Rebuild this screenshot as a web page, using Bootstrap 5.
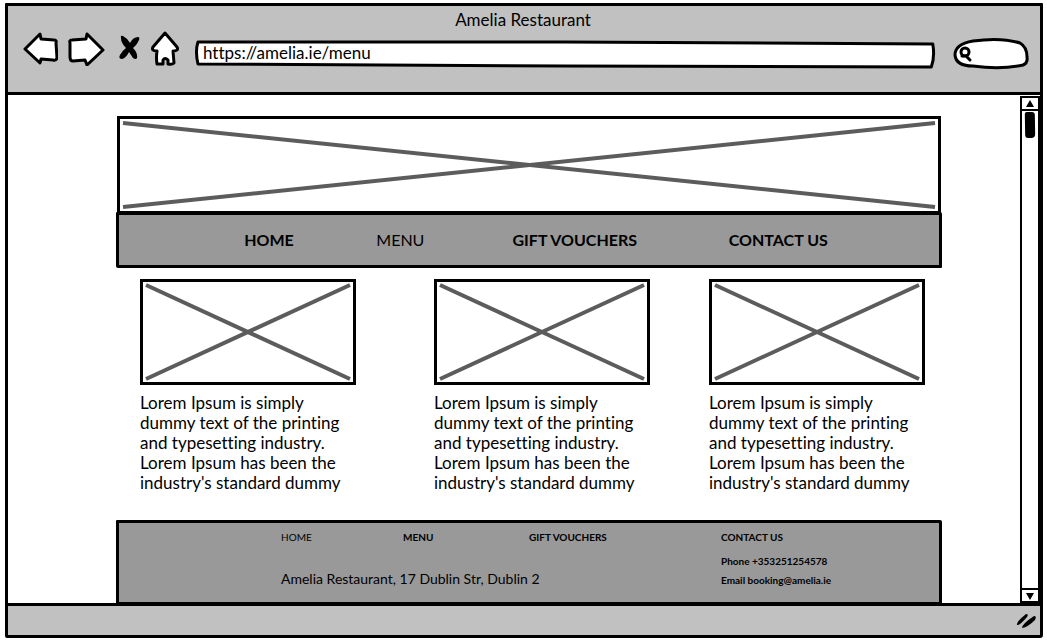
<!DOCTYPE html>
<html lang="en">
<head>
<meta charset="utf-8">
<meta name="viewport" content="width=device-width, initial-scale=1">
<title>Amelia Restaurant</title>
<link href="https://cdn.jsdelivr.net/npm/bootstrap@5.3.0/dist/css/bootstrap.min.css" rel="stylesheet">
<style>
  body { font-family: Lato, "Open Sans", sans-serif; font-variant-ligatures: none; color: #000; background: #fff; padding: 3px 4px 4px 5px; }
  a, a:hover { color: #000; text-decoration: none; }
  .browser { min-height: calc(100vh - 7px); border: 3px solid #000; border-radius: 1px 1px 3px 2px; }
  .chrome { background: #c1c1c1; border-bottom: 3px solid #000; padding-bottom: 25px; }
  .page-title { font-size: 17px; line-height: 20px; padding: 4px 2px 0 0; height: 23px; }
  .tools { padding: 0 11px 0 15px; }
  .tool { border: 0 solid #000; background: none; padding: 0; line-height: 0; }
  .icons { gap: 9px; width: 172px; }
  .ink { fill: #fff; stroke: #000; stroke-width: 3; stroke-linejoin: round; stroke-linecap: round; }
  .ink path { vector-effect: non-scaling-stroke; }
  .field { position: relative; height: 30px; padding-top: 10px; }
  .field > .ink { position: absolute; top: 0; left: 0; width: 100%; height: 100%; overflow: visible; }
  .field input { display: block; position: relative; width: 100%; height: 26px; border: 0; background: none; padding: 0 8px; font-size: 17px; line-height: 24px; color: #000; outline: 0; font-variant-ligatures: none; }
  .find { width: 76px; margin-left: 18px; }
  .find input { padding-left: 24px; }
  .field > .lens { width: 14px; height: 16px; left: 5px; top: 17px; }
  .site { padding: 21px 78px 0 108px; }
  .box { border: 3px solid #000; background: #fff; padding: 4px 3px; }
  .box svg { display: block; width: 100%; height: 100%; overflow: visible; }
  .box line { stroke: #5c5c5c; stroke-width: 4; vector-effect: non-scaling-stroke; }
  .hero { height: 98px; margin: 0 1px; }
  .bar { background: #999; border: 3px solid #000; border-radius: 1px 2px 1px 2px; }
  .main-menu { display: grid; grid-template-columns: 125fr 132fr 136fr 216fr 210fr; margin-top: -2px; height: 56px; align-items: center; font-size: 16px; line-height: 22px; padding-bottom: 1px; }
  .main-menu a:first-child, .foot a:first-child { grid-column-start: 2; }
  .cards { display: grid; grid-template-columns: 24fr 216fr 78fr 216fr 59fr 216fr 17fr; padding-top: 11px; }
  .dish:nth-child(1) { grid-column: 2; }
  .dish:nth-child(2) { grid-column: 4; }
  .dish:nth-child(3) { grid-column: 6; }
  .dish .box { height: 106px; padding: 3px; }
  .dish p { font-size: 17px; line-height: 20px; margin: 8px 0 0; white-space: nowrap; }
  .foot { display: grid; grid-template-columns: 162fr 122fr 126fr 192fr 218fr; grid-template-rows: 28px 19px 19px; margin-top: auto; margin-bottom: -2px; font-size: 10px; line-height: 28px; height: 85px; }
  .place { grid-column: 2 / 5; grid-row: 2 / 4; font-size: 14px; line-height: 20px; align-self: end; font-style: normal; }
  .foot .line { grid-column: 5; line-height: 21px; }
  .scroller { width: 20px; margin: 1px 0 0; border: 2px solid #000; }
  .scroller button { height: 13px; }
  .up { border-bottom-width: 2px; }
  .down { border-top-width: 2px; }
  .thumb { width: 10px; height: 26px; background: #000; border-radius: 2px 3px 4px 3px; margin: 1px auto; transform: rotate(-1deg); }
  .status { background: #c1c1c1; border-top: 3px solid #000; height: 32px; padding: 0 3px; }
</style>
</head>
<body>
<div class="browser d-flex flex-column">
  <header class="chrome">
    <div class="page-title text-center">Amelia Restaurant</div>
    <div class="tools d-flex align-items-start">
      <div class="icons d-flex align-items-start flex-shrink-0">
        <button class="tool" type="button" aria-label="Back"><svg class="ink" width="35" height="36"><path d="M2 20 17 5 18 10 31 11Q34 11 33 14L34 29Q33 32 30 31L18 30 17 34Z"/></svg></button>
        <button class="tool" type="button" aria-label="Forward"><svg class="ink" width="38" height="37"><path d="M3 14Q2 11 5 11L19 10 20 5 36 21 20 36 18 31 6 32Q3 32 3 28Z"/></svg></button>
        <button class="tool ms-1" type="button" aria-label="Stop"><svg width="22" height="32"><path d="M3 9Q2 6 5 7 9 9 12 14 15 8 20 8 22 8 21 11 19 16 15 19 20 24 19 29 18 31 15 29L11 23Q8 29 4 30 0 30 2 26 4 22 8 19 3 14 3 9Z"/></svg></button>
        <button class="tool" type="button" aria-label="Home"><svg class="ink" width="30" height="38"><path d="M16 4 28 18Q30 22 24 22L25 34Q23 36 19 35L19 31Q16 28 14 31L14 35 8 35Q7 29 8 22 2 22 4 18Z"/></svg></button>
      </div>
      <div class="field flex-grow-1">
        <svg class="ink" viewBox="0 0 100 30" preserveAspectRatio="none" aria-hidden="true"><path d="M.4 13Q0 22 .4 35L50 37 99.5 38Q100 28 99.7 15L50 13Z"/></svg>
        <input type="text" aria-label="Address" value="https://amelia.ie/menu">
      </div>
      <div class="field find">
        <svg class="ink" viewBox="0 0 76 30" preserveAspectRatio="none" aria-hidden="true"><path d="M20 12Q48 8 67 14 74 18 74 28 75 34 70 36 48 41 20 37 3 37 2 26 2 15 20 12Z"/></svg>
        <svg class="ink lens" viewBox="0 0 14 16" aria-hidden="true"><circle cx="7" cy="6" r="4"/><path d="M4 10 8 10 12 14"/></svg>
        <input type="text" aria-label="Search">
      </div>
    </div>
  </header>
  <div class="d-flex flex-grow-1">
    <div class="site d-flex flex-column flex-grow-1">
      <div class="box hero"><svg viewBox="0 0 100 100" preserveAspectRatio="none" role="img" aria-label="Banner"><line x1="0" y1="0" x2="100" y2="100"/><line x1="0" y1="100" x2="100" y2="0"/></svg></div>
      <nav class="bar main-menu fw-bold">
        <a href="#">HOME</a><a href="#" class="fw-normal" aria-current="page">MENU</a><a href="#">GIFT VOUCHERS</a><a href="#">CONTACT US</a>
      </nav>
      <main class="cards">
        <article class="dish"><div class="box"><svg viewBox="0 0 100 100" preserveAspectRatio="none" role="img" aria-label="Picture"><line x1="0" y1="0" x2="100" y2="100"/><line x1="0" y1="100" x2="100" y2="0"/></svg></div>
          <p>Lorem Ipsum is simply<br>dummy text of the printing<br>and typesetting industry.<br>Lorem Ipsum has been the<br>industry's standard dummy</p></article>
        <article class="dish"><div class="box"><svg viewBox="0 0 100 100" preserveAspectRatio="none" role="img" aria-label="Picture"><line x1="0" y1="0" x2="100" y2="100"/><line x1="0" y1="100" x2="100" y2="0"/></svg></div>
          <p>Lorem Ipsum is simply<br>dummy text of the printing<br>and typesetting industry.<br>Lorem Ipsum has been the<br>industry's standard dummy</p></article>
        <article class="dish"><div class="box"><svg viewBox="0 0 100 100" preserveAspectRatio="none" role="img" aria-label="Picture"><line x1="0" y1="0" x2="100" y2="100"/><line x1="0" y1="100" x2="100" y2="0"/></svg></div>
          <p>Lorem Ipsum is simply<br>dummy text of the printing<br>and typesetting industry.<br>Lorem Ipsum has been the<br>industry's standard dummy</p></article>
      </main>
      <footer class="bar foot fw-bold">
        <a href="#" class="fw-normal">HOME</a><a href="#">MENU</a><a href="#">GIFT VOUCHERS</a><a href="#">CONTACT US</a>
        <address class="place fw-normal m-0">Amelia Restaurant, 17 Dublin Str, Dublin 2</address>
        <span class="line">Phone +353251254578</span>
        <span class="line">Email booking@amelia.ie</span>
      </footer>
    </div>
    <div class="scroller d-flex flex-column flex-shrink-0">
      <button class="tool up" type="button" aria-label="Scroll up"><svg width="10" height="10"><path d="M5 1 9 8H1Z"/></svg></button>
      <div class="thumb"></div>
      <button class="tool down mt-auto" type="button" aria-label="Scroll down"><svg width="10" height="10"><path d="M1 2H9L5 9Z"/></svg></button>
    </div>
  </div>
  <div class="status d-flex align-items-center justify-content-end">
    <svg width="21" height="18" aria-hidden="true"><path d="M1 13Q0 10 10 2 13 2 11 5 5 12 2 13ZM6 16Q6 12 18 4 21 4 19 8 12 15 6 16Z"/></svg>
  </div>
</div>
<script src="https://cdn.jsdelivr.net/npm/bootstrap@5.3.0/dist/js/bootstrap.bundle.min.js"></script>
</body>
</html>
